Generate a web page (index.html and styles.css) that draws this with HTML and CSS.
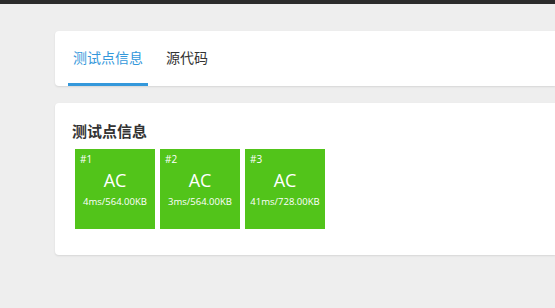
FILE: index.html
```html
<!DOCTYPE html>
<html lang="zh">
<head>
<meta charset="utf-8">
<title>测试点信息</title>
<link rel="stylesheet" href="styles.css">
</head>
<body>
<div class="topbar"></div>
<main class="main">
  <section class="card tabs-card">
    <nav class="tabs">
      <div class="tab active">测试点信息</div>
      <div class="tab">源代码</div>
    </nav>
  </section>
  <section class="card cases-card">
    <h3 class="title">测试点信息</h3>
    <div class="cases">
      <div class="case">
        <div class="case-id">#1</div>
        <div class="case-status">AC</div>
        <div class="case-stat">4ms/564.00KB</div>
      </div>
      <div class="case">
        <div class="case-id">#2</div>
        <div class="case-status">AC</div>
        <div class="case-stat">3ms/564.00KB</div>
      </div>
      <div class="case">
        <div class="case-id">#3</div>
        <div class="case-status">AC</div>
        <div class="case-stat">41ms/728.00KB</div>
      </div>
    </div>
  </section>
</main>
</body>
</html>
```
FILE: styles.css
```css
html, body {
  margin: 0;
  padding: 0;
}
body {
  background: #eeeeee;
  font-family: "Open Sans", "Noto Sans CJK SC", sans-serif;
  color: #333;
  width: 555px;
  height: 308px;
  overflow: hidden;
}
.topbar {
  height: 4px;
  background: #2b2b2b;
}
.main {
  padding: 27px 0 0 55px;
}
.card {
  background: #fff;
  border-radius: 4px 0 0 4px;
  box-shadow: 0 1px 2px rgba(0, 0, 0, 0.1);
}
.tabs-card {
  height: 55px;
  padding-left: 13px;
}
.tabs {
  display: flex;
  gap: 13px;
}
.tab {
  font-family: "Noto Sans CJK SC", sans-serif;
  font-size: 14px;
  line-height: 52px;
  padding: 0 5px;
  border-bottom: 3px solid transparent;
  color: #333;
}
.tab.active {
  width: 70px;
  color: #3498db;
  border-bottom-color: #3498db;
}
.cases-card {
  margin-top: 17px;
  height: 152px;
  box-sizing: border-box;
  padding: 17px 17px 26px;
}
.title {
  margin: 0;
  font-family: "Noto Sans CJK SC", sans-serif;
  font-size: 15px;
  line-height: 21px;
  font-weight: 700;
  color: #333;
}
.cases {
  display: flex;
  gap: 5px;
  margin: 8px 0 0 3px;
}
.case {
  width: 80px;
  height: 80px;
  background: #52c41a;
  color: #fff;
  box-sizing: border-box;
  padding: 3px 5px 0;
  display: flex;
  flex-direction: column;
}
.case-id {
  font-size: 10px;
  line-height: 14px;
}
.case-status {
  margin-top: 2px;
  font-size: 18px;
  line-height: 24px;
  text-align: center;
}
.case-stat {
  margin: 3px -5px 0;
  font-size: 9.5px;
  line-height: 14px;
  text-align: center;
  white-space: nowrap;
}
```
